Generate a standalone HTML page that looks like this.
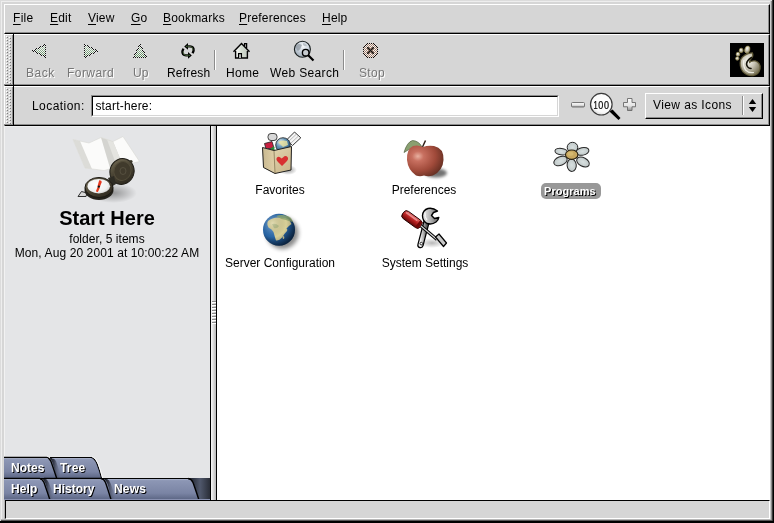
<!DOCTYPE html>
<html><head><meta charset="utf-8">
<style>
*{margin:0;padding:0;box-sizing:border-box}
body{will-change:transform;}
html,body{width:774px;height:523px;overflow:hidden;background:#d6d6d6;font-family:"Liberation Sans",sans-serif;font-size:12px;color:#000}
.a{position:absolute}
.t{position:absolute;white-space:nowrap;line-height:14px}
.ins{color:#767676;text-shadow:1px 1px 0 #fff}
u{text-decoration:underline;text-decoration-thickness:1px;text-underline-offset:2px}
</style></head><body>
<!-- window border -->
<div class="a" style="left:0;top:0;width:774px;height:523px;background:#d6d6d6"></div>
<div class="a" style="left:0;top:0;width:1px;height:523px;background:#dcdcdc"></div>
<div class="a" style="left:0;top:0;width:774px;height:1px;background:#dcdcdc"></div>
<div class="a" style="left:1px;top:1px;width:1px;height:520px;background:#eeeeee"></div>
<div class="a" style="left:1px;top:1px;width:771px;height:1px;background:#eeeeee"></div>
<div class="a" style="left:773px;top:0;width:1px;height:523px;background:#000"></div>
<div class="a" style="left:772px;top:0;width:1px;height:523px;background:#383838"></div>
<div class="a" style="left:771px;top:1px;width:1px;height:521px;background:#8c8c8c"></div>
<div class="a" style="left:770px;top:1px;width:1px;height:521px;background:#cccccc"></div>
<div class="a" style="left:0;top:521px;width:774px;height:2px;background:#000"></div>
<div class="a" style="left:1px;top:520px;width:771px;height:1px;background:#585858"></div>
<div class="a" style="left:1px;top:519px;width:770px;height:1px;background:#b8b8b8"></div>

<!-- menubar x4..769 y4..33 -->
<div class="a" style="left:4px;top:4px;width:766px;height:30px;background:#d6d6d6;border-top:1px solid #fff;border-left:1px solid #fff;border-right:1px solid #000;border-bottom:1px solid #000"></div>
<div class="a" style="left:5px;top:32px;width:764px;height:1px;background:#8c8c8c"></div>
<div class="a" style="left:768px;top:5px;width:1px;height:28px;background:#8c8c8c"></div>

<div class="t" style="left:13px;top:11px;letter-spacing:0.3px"><u>F</u>ile</div>
<div class="t" style="left:50px;top:11px;letter-spacing:0.2px"><u>E</u>dit</div>
<div class="t" style="left:88px;top:11px;letter-spacing:0.2px"><u>V</u>iew</div>
<div class="t" style="left:131px;top:11px;letter-spacing:0.2px"><u>G</u>o</div>
<div class="t" style="left:163px;top:11px;letter-spacing:0.2px"><u>B</u>ookmarks</div>
<div class="t" style="left:239px;top:11px;letter-spacing:0.2px"><u>P</u>references</div>
<div class="t" style="left:322px;top:11px;letter-spacing:0.2px"><u>H</u>elp</div>

<!-- toolbar dock y34..85 -->
<div class="a" style="left:4px;top:34px;width:766px;height:52px;background:#d6d6d6;border-top:1px solid #fff;border-left:1px solid #fff;border-bottom:1px solid #000;border-right:1px solid #000"></div>
<div class="a" style="left:13px;top:34px;width:1px;height:52px;background:#000"></div>
<div class="a" style="left:14px;top:34px;width:755px;height:1px;background:#fff"></div>
<div class="a" style="left:14px;top:84px;width:755px;height:1px;background:#8c8c8c"></div>
<div class="a" style="left:768px;top:35px;width:1px;height:50px;background:#8c8c8c"></div>

<!-- toolbar buttons -->
<div class="t ins" style="left:26px;top:66px;letter-spacing:0.5px">Back</div>
<div class="t ins" style="left:67px;top:66px;letter-spacing:0.45px">Forward</div>
<div class="t ins" style="left:133px;top:66px">Up</div>
<div class="t" style="left:167px;top:66px;letter-spacing:0.18px">Refresh</div>
<div class="t" style="left:226px;top:66px;letter-spacing:0.3px">Home</div>
<div class="t" style="left:270px;top:66px;letter-spacing:0.35px">Web Search</div>
<div class="t ins" style="left:359px;top:66px;letter-spacing:0.3px">Stop</div>
<div class="a" style="left:214px;top:50px;width:1px;height:20px;background:#8c8c8c"></div>
<div class="a" style="left:215px;top:50px;width:1px;height:20px;background:#fff"></div>
<div class="a" style="left:343px;top:50px;width:1px;height:20px;background:#8c8c8c"></div>
<div class="a" style="left:344px;top:50px;width:1px;height:20px;background:#fff"></div>
<svg class="a" style="left:0;top:0" width="774" height="90" viewBox="0 0 774 90">
<defs>
<pattern id="stip" width="2" height="2" patternUnits="userSpaceOnUse"><rect width="2" height="2" fill="#e8ece8"/><rect width="1" height="1" fill="#98a898"/><rect x="1" y="1" width="1" height="1" fill="#98a898"/></pattern>
<pattern id="stip2" width="2" height="2" patternUnits="userSpaceOnUse"><rect width="2" height="2" fill="#f0ecea"/><rect width="1" height="1" fill="#a08878"/><rect x="1" y="1" width="1" height="1" fill="#a08878"/></pattern>
<linearGradient id="houseg" x1="0" y1="0" x2="1" y2="0"><stop offset="0" stop-color="#fff"/><stop offset="0.5" stop-color="#d4dcd0"/><stop offset="1" stop-color="#c0c8c0"/></linearGradient>
<radialGradient id="globeg" cx="0.55" cy="0.3" r="0.75"><stop offset="0" stop-color="#f8fafc"/><stop offset="0.55" stop-color="#c4ced8"/><stop offset="1" stop-color="#98a4b0"/></radialGradient>
</defs>
<!-- refresh -->
<g fill="none" stroke-linecap="butt">
<path d="M187.5 46.4 H190 Q194 46.6 193.6 50.8 L192.6 53.3" stroke="#000" stroke-width="2.3"/>
<path d="M188.5 55.4 H186 Q182 55.2 182.4 51.2 L183.4 48.6" stroke="#000" stroke-width="2.3"/>
<path d="M187.5 46.4 H190 Q193.2 46.8 193 50.3" stroke="#5a7a4a" stroke-width="0.8"/>
<path d="M188.5 55.4 H186 Q183 55 183.1 51.6" stroke="#5a7a4a" stroke-width="0.8"/>
</g>
<path d="M184.2 46.4 L188 43 L188 49.8 Z" fill="#000"/>
<path d="M191.8 55.4 L188 52 L188 58.8 Z" fill="#000"/>
<path d="M186 46.4 L187.4 45.2 L187.4 47.6 Z" fill="#5a8a4a"/>
<path d="M190 55.4 L188.6 54.2 L188.6 56.6 Z" fill="#5a8a4a"/>
<!-- home -->
<path d="M235.5 51.5 L241.5 45 L247.5 51.5 V58 H235.5 Z" fill="url(#houseg)"/>
<path d="M233.5 51.7 L241.5 43.5 L249.5 51.7" fill="none" stroke="#000" stroke-width="1.4"/>
<path d="M235.6 51 V58 H247.4 V51" fill="none" stroke="#000" stroke-width="1.4"/>
<path d="M244.6 46 V43.6 H246.6 V48" fill="none" stroke="#000" stroke-width="1.3"/>
<path d="M238.6 58 V53.6 H241.4 V58" fill="#e8ece8" stroke="#000" stroke-width="1.3"/>
<!-- web search -->
<circle cx="302.4" cy="49.2" r="8" fill="url(#globeg)" stroke="#1a2020" stroke-width="1.1"/>
<path d="M296 45 Q299 43 302 45 Q301 49 298 51 Q295.5 49 296 45 Z" fill="#8c949c" opacity="0.7"/>
<path d="M303 43 Q306 43 307 46 Q305 47 303 45 Z" fill="#a8b0b8" opacity="0.7"/>
<line x1="308.2" y1="55.2" x2="313.5" y2="60.5" stroke="#000" stroke-width="2.2"/>
<circle cx="305.7" cy="52.7" r="3.3" fill="#c8ccd0" stroke="#000" stroke-width="1.4"/>
</svg>

<svg class="a" style="left:0;top:0" width="400" height="70" viewBox="0 0 400 70" shape-rendering="crispEdges"><rect x="44" y="44" width="1" height="1" fill="#101010"/><rect x="45" y="44" width="1" height="1" fill="#e8e8e8"/><rect x="42" y="45" width="1" height="1" fill="#e8e8e8"/><rect x="43" y="45" width="1" height="1" fill="#101010"/><rect x="44" y="45" width="1" height="1" fill="#e8e8e8"/><rect x="45" y="45" width="1" height="1" fill="#101010"/><rect x="40" y="46" width="1" height="1" fill="#101010"/><rect x="41" y="46" width="1" height="1" fill="#e8e8e8"/><rect x="42" y="46" width="1" height="1" fill="#101010"/><rect x="43" y="46" width="1" height="1" fill="#f4f4f4"/><rect x="44" y="46" width="1" height="1" fill="#acc5ac"/><rect x="45" y="46" width="1" height="1" fill="#e8e8e8"/><rect x="38" y="47" width="1" height="1" fill="#e8e8e8"/><rect x="39" y="47" width="1" height="1" fill="#101010"/><rect x="40" y="47" width="1" height="1" fill="#e8e8e8"/><rect x="41" y="47" width="1" height="1" fill="#a4bea4"/><rect x="42" y="47" width="1" height="1" fill="#f4f4f4"/><rect x="43" y="47" width="1" height="1" fill="#a4bea4"/><rect x="44" y="47" width="1" height="1" fill="#f4f4f4"/><rect x="45" y="47" width="1" height="1" fill="#101010"/><rect x="36" y="48" width="1" height="1" fill="#101010"/><rect x="37" y="48" width="1" height="1" fill="#e8e8e8"/><rect x="38" y="48" width="1" height="1" fill="#101010"/><rect x="39" y="48" width="1" height="1" fill="#f4f4f4"/><rect x="40" y="48" width="1" height="1" fill="#9bb89b"/><rect x="41" y="48" width="1" height="1" fill="#f4f4f4"/><rect x="42" y="48" width="1" height="1" fill="#9bb89b"/><rect x="43" y="48" width="1" height="1" fill="#f4f4f4"/><rect x="44" y="48" width="1" height="1" fill="#9bb89b"/><rect x="45" y="48" width="1" height="1" fill="#e8e8e8"/><rect x="34" y="49" width="1" height="1" fill="#e8e8e8"/><rect x="35" y="49" width="1" height="1" fill="#101010"/><rect x="36" y="49" width="1" height="1" fill="#e8e8e8"/><rect x="37" y="49" width="1" height="1" fill="#93b193"/><rect x="38" y="49" width="1" height="1" fill="#f4f4f4"/><rect x="39" y="49" width="1" height="1" fill="#93b193"/><rect x="40" y="49" width="1" height="1" fill="#f4f4f4"/><rect x="41" y="49" width="1" height="1" fill="#93b193"/><rect x="42" y="49" width="1" height="1" fill="#f4f4f4"/><rect x="43" y="49" width="1" height="1" fill="#93b193"/><rect x="44" y="49" width="1" height="1" fill="#f4f4f4"/><rect x="45" y="49" width="1" height="1" fill="#101010"/><rect x="32" y="50" width="1" height="1" fill="#101010"/><rect x="33" y="50" width="1" height="1" fill="#e8e8e8"/><rect x="34" y="50" width="1" height="1" fill="#101010"/><rect x="35" y="50" width="1" height="1" fill="#f4f4f4"/><rect x="36" y="50" width="1" height="1" fill="#8aab8a"/><rect x="37" y="50" width="1" height="1" fill="#f4f4f4"/><rect x="38" y="50" width="1" height="1" fill="#8aab8a"/><rect x="39" y="50" width="1" height="1" fill="#f4f4f4"/><rect x="40" y="50" width="1" height="1" fill="#8aab8a"/><rect x="41" y="50" width="1" height="1" fill="#f4f4f4"/><rect x="42" y="50" width="1" height="1" fill="#8aab8a"/><rect x="43" y="50" width="1" height="1" fill="#f4f4f4"/><rect x="44" y="50" width="1" height="1" fill="#8aab8a"/><rect x="45" y="50" width="1" height="1" fill="#e8e8e8"/><rect x="33" y="51" width="1" height="1" fill="#101010"/><rect x="34" y="51" width="1" height="1" fill="#e8e8e8"/><rect x="35" y="51" width="1" height="1" fill="#101010"/><rect x="36" y="51" width="1" height="1" fill="#f4f4f4"/><rect x="37" y="51" width="1" height="1" fill="#82a582"/><rect x="38" y="51" width="1" height="1" fill="#f4f4f4"/><rect x="39" y="51" width="1" height="1" fill="#82a582"/><rect x="40" y="51" width="1" height="1" fill="#f4f4f4"/><rect x="41" y="51" width="1" height="1" fill="#82a582"/><rect x="42" y="51" width="1" height="1" fill="#f4f4f4"/><rect x="43" y="51" width="1" height="1" fill="#82a582"/><rect x="44" y="51" width="1" height="1" fill="#f4f4f4"/><rect x="45" y="51" width="1" height="1" fill="#101010"/><rect x="35" y="52" width="1" height="1" fill="#e8e8e8"/><rect x="36" y="52" width="1" height="1" fill="#101010"/><rect x="37" y="52" width="1" height="1" fill="#e8e8e8"/><rect x="38" y="52" width="1" height="1" fill="#799e79"/><rect x="39" y="52" width="1" height="1" fill="#f4f4f4"/><rect x="40" y="52" width="1" height="1" fill="#799e79"/><rect x="41" y="52" width="1" height="1" fill="#f4f4f4"/><rect x="42" y="52" width="1" height="1" fill="#799e79"/><rect x="43" y="52" width="1" height="1" fill="#f4f4f4"/><rect x="44" y="52" width="1" height="1" fill="#799e79"/><rect x="45" y="52" width="1" height="1" fill="#e8e8e8"/><rect x="37" y="53" width="1" height="1" fill="#101010"/><rect x="38" y="53" width="1" height="1" fill="#e8e8e8"/><rect x="39" y="53" width="1" height="1" fill="#101010"/><rect x="40" y="53" width="1" height="1" fill="#f4f4f4"/><rect x="41" y="53" width="1" height="1" fill="#709870"/><rect x="42" y="53" width="1" height="1" fill="#f4f4f4"/><rect x="43" y="53" width="1" height="1" fill="#709870"/><rect x="44" y="53" width="1" height="1" fill="#f4f4f4"/><rect x="45" y="53" width="1" height="1" fill="#101010"/><rect x="39" y="54" width="1" height="1" fill="#e8e8e8"/><rect x="40" y="54" width="1" height="1" fill="#101010"/><rect x="41" y="54" width="1" height="1" fill="#e8e8e8"/><rect x="42" y="54" width="1" height="1" fill="#689168"/><rect x="43" y="54" width="1" height="1" fill="#f4f4f4"/><rect x="44" y="54" width="1" height="1" fill="#689168"/><rect x="45" y="54" width="1" height="1" fill="#e8e8e8"/><rect x="41" y="55" width="1" height="1" fill="#101010"/><rect x="42" y="55" width="1" height="1" fill="#e8e8e8"/><rect x="43" y="55" width="1" height="1" fill="#101010"/><rect x="44" y="55" width="1" height="1" fill="#f4f4f4"/><rect x="45" y="55" width="1" height="1" fill="#101010"/><rect x="43" y="56" width="1" height="1" fill="#e8e8e8"/><rect x="44" y="56" width="1" height="1" fill="#101010"/><rect x="45" y="56" width="1" height="1" fill="#e8e8e8"/><rect x="45" y="57" width="1" height="1" fill="#101010"/><rect x="84" y="44" width="1" height="1" fill="#101010"/><rect x="85" y="44" width="1" height="1" fill="#e8e8e8"/><rect x="84" y="45" width="1" height="1" fill="#e8e8e8"/><rect x="85" y="45" width="1" height="1" fill="#101010"/><rect x="86" y="45" width="1" height="1" fill="#e8e8e8"/><rect x="87" y="45" width="1" height="1" fill="#101010"/><rect x="84" y="46" width="1" height="1" fill="#101010"/><rect x="85" y="46" width="1" height="1" fill="#f4f4f4"/><rect x="86" y="46" width="1" height="1" fill="#acc5ac"/><rect x="87" y="46" width="1" height="1" fill="#e8e8e8"/><rect x="88" y="46" width="1" height="1" fill="#101010"/><rect x="89" y="46" width="1" height="1" fill="#e8e8e8"/><rect x="84" y="47" width="1" height="1" fill="#e8e8e8"/><rect x="85" y="47" width="1" height="1" fill="#a4bea4"/><rect x="86" y="47" width="1" height="1" fill="#f4f4f4"/><rect x="87" y="47" width="1" height="1" fill="#a4bea4"/><rect x="88" y="47" width="1" height="1" fill="#f4f4f4"/><rect x="89" y="47" width="1" height="1" fill="#101010"/><rect x="90" y="47" width="1" height="1" fill="#e8e8e8"/><rect x="91" y="47" width="1" height="1" fill="#101010"/><rect x="84" y="48" width="1" height="1" fill="#101010"/><rect x="85" y="48" width="1" height="1" fill="#f4f4f4"/><rect x="86" y="48" width="1" height="1" fill="#9bb89b"/><rect x="87" y="48" width="1" height="1" fill="#f4f4f4"/><rect x="88" y="48" width="1" height="1" fill="#9bb89b"/><rect x="89" y="48" width="1" height="1" fill="#f4f4f4"/><rect x="90" y="48" width="1" height="1" fill="#9bb89b"/><rect x="91" y="48" width="1" height="1" fill="#e8e8e8"/><rect x="92" y="48" width="1" height="1" fill="#101010"/><rect x="93" y="48" width="1" height="1" fill="#e8e8e8"/><rect x="84" y="49" width="1" height="1" fill="#e8e8e8"/><rect x="85" y="49" width="1" height="1" fill="#93b193"/><rect x="86" y="49" width="1" height="1" fill="#f4f4f4"/><rect x="87" y="49" width="1" height="1" fill="#93b193"/><rect x="88" y="49" width="1" height="1" fill="#f4f4f4"/><rect x="89" y="49" width="1" height="1" fill="#93b193"/><rect x="90" y="49" width="1" height="1" fill="#f4f4f4"/><rect x="91" y="49" width="1" height="1" fill="#93b193"/><rect x="92" y="49" width="1" height="1" fill="#f4f4f4"/><rect x="93" y="49" width="1" height="1" fill="#101010"/><rect x="94" y="49" width="1" height="1" fill="#e8e8e8"/><rect x="95" y="49" width="1" height="1" fill="#101010"/><rect x="84" y="50" width="1" height="1" fill="#101010"/><rect x="85" y="50" width="1" height="1" fill="#f4f4f4"/><rect x="86" y="50" width="1" height="1" fill="#8aab8a"/><rect x="87" y="50" width="1" height="1" fill="#f4f4f4"/><rect x="88" y="50" width="1" height="1" fill="#8aab8a"/><rect x="89" y="50" width="1" height="1" fill="#f4f4f4"/><rect x="90" y="50" width="1" height="1" fill="#8aab8a"/><rect x="91" y="50" width="1" height="1" fill="#f4f4f4"/><rect x="92" y="50" width="1" height="1" fill="#8aab8a"/><rect x="93" y="50" width="1" height="1" fill="#f4f4f4"/><rect x="94" y="50" width="1" height="1" fill="#8aab8a"/><rect x="95" y="50" width="1" height="1" fill="#e8e8e8"/><rect x="96" y="50" width="1" height="1" fill="#101010"/><rect x="97" y="50" width="1" height="1" fill="#e8e8e8"/><rect x="84" y="51" width="1" height="1" fill="#e8e8e8"/><rect x="85" y="51" width="1" height="1" fill="#82a582"/><rect x="86" y="51" width="1" height="1" fill="#f4f4f4"/><rect x="87" y="51" width="1" height="1" fill="#82a582"/><rect x="88" y="51" width="1" height="1" fill="#f4f4f4"/><rect x="89" y="51" width="1" height="1" fill="#82a582"/><rect x="90" y="51" width="1" height="1" fill="#f4f4f4"/><rect x="91" y="51" width="1" height="1" fill="#82a582"/><rect x="92" y="51" width="1" height="1" fill="#f4f4f4"/><rect x="93" y="51" width="1" height="1" fill="#82a582"/><rect x="94" y="51" width="1" height="1" fill="#f4f4f4"/><rect x="95" y="51" width="1" height="1" fill="#101010"/><rect x="96" y="51" width="1" height="1" fill="#e8e8e8"/><rect x="97" y="51" width="1" height="1" fill="#101010"/><rect x="84" y="52" width="1" height="1" fill="#101010"/><rect x="85" y="52" width="1" height="1" fill="#f4f4f4"/><rect x="86" y="52" width="1" height="1" fill="#799e79"/><rect x="87" y="52" width="1" height="1" fill="#f4f4f4"/><rect x="88" y="52" width="1" height="1" fill="#799e79"/><rect x="89" y="52" width="1" height="1" fill="#f4f4f4"/><rect x="90" y="52" width="1" height="1" fill="#799e79"/><rect x="91" y="52" width="1" height="1" fill="#f4f4f4"/><rect x="92" y="52" width="1" height="1" fill="#799e79"/><rect x="93" y="52" width="1" height="1" fill="#e8e8e8"/><rect x="94" y="52" width="1" height="1" fill="#101010"/><rect x="95" y="52" width="1" height="1" fill="#e8e8e8"/><rect x="84" y="53" width="1" height="1" fill="#e8e8e8"/><rect x="85" y="53" width="1" height="1" fill="#709870"/><rect x="86" y="53" width="1" height="1" fill="#f4f4f4"/><rect x="87" y="53" width="1" height="1" fill="#709870"/><rect x="88" y="53" width="1" height="1" fill="#f4f4f4"/><rect x="89" y="53" width="1" height="1" fill="#709870"/><rect x="90" y="53" width="1" height="1" fill="#f4f4f4"/><rect x="91" y="53" width="1" height="1" fill="#101010"/><rect x="92" y="53" width="1" height="1" fill="#e8e8e8"/><rect x="93" y="53" width="1" height="1" fill="#101010"/><rect x="84" y="54" width="1" height="1" fill="#101010"/><rect x="85" y="54" width="1" height="1" fill="#f4f4f4"/><rect x="86" y="54" width="1" height="1" fill="#689168"/><rect x="87" y="54" width="1" height="1" fill="#f4f4f4"/><rect x="88" y="54" width="1" height="1" fill="#689168"/><rect x="89" y="54" width="1" height="1" fill="#e8e8e8"/><rect x="90" y="54" width="1" height="1" fill="#101010"/><rect x="91" y="54" width="1" height="1" fill="#e8e8e8"/><rect x="84" y="55" width="1" height="1" fill="#e8e8e8"/><rect x="85" y="55" width="1" height="1" fill="#5f8b5f"/><rect x="86" y="55" width="1" height="1" fill="#f4f4f4"/><rect x="87" y="55" width="1" height="1" fill="#101010"/><rect x="88" y="55" width="1" height="1" fill="#e8e8e8"/><rect x="89" y="55" width="1" height="1" fill="#101010"/><rect x="84" y="56" width="1" height="1" fill="#101010"/><rect x="85" y="56" width="1" height="1" fill="#e8e8e8"/><rect x="86" y="56" width="1" height="1" fill="#101010"/><rect x="87" y="56" width="1" height="1" fill="#e8e8e8"/><rect x="84" y="57" width="1" height="1" fill="#e8e8e8"/><rect x="85" y="57" width="1" height="1" fill="#101010"/><rect x="139" y="44" width="1" height="1" fill="#e8e8e8"/><rect x="140" y="44" width="1" height="1" fill="#101010"/><rect x="139" y="45" width="1" height="1" fill="#101010"/><rect x="140" y="45" width="1" height="1" fill="#e8e8e8"/><rect x="138" y="46" width="1" height="1" fill="#101010"/><rect x="139" y="46" width="1" height="1" fill="#e8e8e8"/><rect x="140" y="46" width="1" height="1" fill="#101010"/><rect x="141" y="46" width="1" height="1" fill="#e8e8e8"/><rect x="138" y="47" width="1" height="1" fill="#e8e8e8"/><rect x="139" y="47" width="1" height="1" fill="#a4bea4"/><rect x="140" y="47" width="1" height="1" fill="#f4f4f4"/><rect x="141" y="47" width="1" height="1" fill="#101010"/><rect x="137" y="48" width="1" height="1" fill="#e8e8e8"/><rect x="138" y="48" width="1" height="1" fill="#101010"/><rect x="139" y="48" width="1" height="1" fill="#f4f4f4"/><rect x="140" y="48" width="1" height="1" fill="#9bb89b"/><rect x="141" y="48" width="1" height="1" fill="#e8e8e8"/><rect x="142" y="48" width="1" height="1" fill="#101010"/><rect x="137" y="49" width="1" height="1" fill="#101010"/><rect x="138" y="49" width="1" height="1" fill="#f4f4f4"/><rect x="139" y="49" width="1" height="1" fill="#93b193"/><rect x="140" y="49" width="1" height="1" fill="#f4f4f4"/><rect x="141" y="49" width="1" height="1" fill="#93b193"/><rect x="142" y="49" width="1" height="1" fill="#e8e8e8"/><rect x="136" y="50" width="1" height="1" fill="#101010"/><rect x="137" y="50" width="1" height="1" fill="#e8e8e8"/><rect x="138" y="50" width="1" height="1" fill="#8aab8a"/><rect x="139" y="50" width="1" height="1" fill="#f4f4f4"/><rect x="140" y="50" width="1" height="1" fill="#8aab8a"/><rect x="141" y="50" width="1" height="1" fill="#f4f4f4"/><rect x="142" y="50" width="1" height="1" fill="#101010"/><rect x="143" y="50" width="1" height="1" fill="#e8e8e8"/><rect x="136" y="51" width="1" height="1" fill="#e8e8e8"/><rect x="137" y="51" width="1" height="1" fill="#82a582"/><rect x="138" y="51" width="1" height="1" fill="#f4f4f4"/><rect x="139" y="51" width="1" height="1" fill="#82a582"/><rect x="140" y="51" width="1" height="1" fill="#f4f4f4"/><rect x="141" y="51" width="1" height="1" fill="#82a582"/><rect x="142" y="51" width="1" height="1" fill="#f4f4f4"/><rect x="143" y="51" width="1" height="1" fill="#101010"/><rect x="135" y="52" width="1" height="1" fill="#e8e8e8"/><rect x="136" y="52" width="1" height="1" fill="#101010"/><rect x="137" y="52" width="1" height="1" fill="#f4f4f4"/><rect x="138" y="52" width="1" height="1" fill="#799e79"/><rect x="139" y="52" width="1" height="1" fill="#f4f4f4"/><rect x="140" y="52" width="1" height="1" fill="#799e79"/><rect x="141" y="52" width="1" height="1" fill="#f4f4f4"/><rect x="142" y="52" width="1" height="1" fill="#799e79"/><rect x="143" y="52" width="1" height="1" fill="#e8e8e8"/><rect x="144" y="52" width="1" height="1" fill="#101010"/><rect x="135" y="53" width="1" height="1" fill="#101010"/><rect x="136" y="53" width="1" height="1" fill="#f4f4f4"/><rect x="137" y="53" width="1" height="1" fill="#709870"/><rect x="138" y="53" width="1" height="1" fill="#f4f4f4"/><rect x="139" y="53" width="1" height="1" fill="#709870"/><rect x="140" y="53" width="1" height="1" fill="#f4f4f4"/><rect x="141" y="53" width="1" height="1" fill="#709870"/><rect x="142" y="53" width="1" height="1" fill="#f4f4f4"/><rect x="143" y="53" width="1" height="1" fill="#709870"/><rect x="144" y="53" width="1" height="1" fill="#e8e8e8"/><rect x="134" y="54" width="1" height="1" fill="#101010"/><rect x="135" y="54" width="1" height="1" fill="#e8e8e8"/><rect x="136" y="54" width="1" height="1" fill="#689168"/><rect x="137" y="54" width="1" height="1" fill="#f4f4f4"/><rect x="138" y="54" width="1" height="1" fill="#689168"/><rect x="139" y="54" width="1" height="1" fill="#f4f4f4"/><rect x="140" y="54" width="1" height="1" fill="#689168"/><rect x="141" y="54" width="1" height="1" fill="#f4f4f4"/><rect x="142" y="54" width="1" height="1" fill="#689168"/><rect x="143" y="54" width="1" height="1" fill="#f4f4f4"/><rect x="144" y="54" width="1" height="1" fill="#101010"/><rect x="145" y="54" width="1" height="1" fill="#e8e8e8"/><rect x="134" y="55" width="1" height="1" fill="#e8e8e8"/><rect x="135" y="55" width="1" height="1" fill="#5f8b5f"/><rect x="136" y="55" width="1" height="1" fill="#f4f4f4"/><rect x="137" y="55" width="1" height="1" fill="#5f8b5f"/><rect x="138" y="55" width="1" height="1" fill="#f4f4f4"/><rect x="139" y="55" width="1" height="1" fill="#5f8b5f"/><rect x="140" y="55" width="1" height="1" fill="#f4f4f4"/><rect x="141" y="55" width="1" height="1" fill="#5f8b5f"/><rect x="142" y="55" width="1" height="1" fill="#f4f4f4"/><rect x="143" y="55" width="1" height="1" fill="#5f8b5f"/><rect x="144" y="55" width="1" height="1" fill="#f4f4f4"/><rect x="145" y="55" width="1" height="1" fill="#101010"/><rect x="133" y="56" width="1" height="1" fill="#e8e8e8"/><rect x="134" y="56" width="1" height="1" fill="#101010"/><rect x="135" y="56" width="1" height="1" fill="#f4f4f4"/><rect x="136" y="56" width="1" height="1" fill="#578457"/><rect x="137" y="56" width="1" height="1" fill="#f4f4f4"/><rect x="138" y="56" width="1" height="1" fill="#578457"/><rect x="139" y="56" width="1" height="1" fill="#f4f4f4"/><rect x="140" y="56" width="1" height="1" fill="#578457"/><rect x="141" y="56" width="1" height="1" fill="#f4f4f4"/><rect x="142" y="56" width="1" height="1" fill="#578457"/><rect x="143" y="56" width="1" height="1" fill="#f4f4f4"/><rect x="144" y="56" width="1" height="1" fill="#578457"/><rect x="145" y="56" width="1" height="1" fill="#e8e8e8"/><rect x="146" y="56" width="1" height="1" fill="#101010"/><rect x="133" y="57" width="1" height="1" fill="#101010"/><rect x="134" y="57" width="1" height="1" fill="#e8e8e8"/><rect x="135" y="57" width="1" height="1" fill="#101010"/><rect x="136" y="57" width="1" height="1" fill="#e8e8e8"/><rect x="137" y="57" width="1" height="1" fill="#101010"/><rect x="138" y="57" width="1" height="1" fill="#e8e8e8"/><rect x="139" y="57" width="1" height="1" fill="#101010"/><rect x="140" y="57" width="1" height="1" fill="#e8e8e8"/><rect x="141" y="57" width="1" height="1" fill="#101010"/><rect x="142" y="57" width="1" height="1" fill="#e8e8e8"/><rect x="143" y="57" width="1" height="1" fill="#101010"/><rect x="144" y="57" width="1" height="1" fill="#e8e8e8"/><rect x="145" y="57" width="1" height="1" fill="#101010"/><rect x="146" y="57" width="1" height="1" fill="#e8e8e8"/><rect x="367" y="43" width="1" height="1" fill="#100808"/><rect x="368" y="43" width="1" height="1" fill="#e0d8d0"/><rect x="369" y="43" width="1" height="1" fill="#100808"/><rect x="370" y="43" width="1" height="1" fill="#e0d8d0"/><rect x="371" y="43" width="1" height="1" fill="#100808"/><rect x="372" y="43" width="1" height="1" fill="#e0d8d0"/><rect x="373" y="43" width="1" height="1" fill="#100808"/><rect x="365" y="44" width="1" height="1" fill="#e0d8d0"/><rect x="366" y="44" width="1" height="1" fill="#100808"/><rect x="367" y="44" width="1" height="1" fill="#e0d8d0"/><rect x="368" y="44" width="1" height="1" fill="#a08070"/><rect x="369" y="44" width="1" height="1" fill="#f8f4f0"/><rect x="370" y="44" width="1" height="1" fill="#a08070"/><rect x="371" y="44" width="1" height="1" fill="#f8f4f0"/><rect x="372" y="44" width="1" height="1" fill="#a08070"/><rect x="373" y="44" width="1" height="1" fill="#e0d8d0"/><rect x="374" y="44" width="1" height="1" fill="#100808"/><rect x="375" y="44" width="1" height="1" fill="#e0d8d0"/><rect x="364" y="45" width="1" height="1" fill="#e0d8d0"/><rect x="365" y="45" width="1" height="1" fill="#100808"/><rect x="366" y="45" width="1" height="1" fill="#f8f4f0"/><rect x="367" y="45" width="1" height="1" fill="#a08070"/><rect x="368" y="45" width="1" height="1" fill="#f8f4f0"/><rect x="369" y="45" width="1" height="1" fill="#a08070"/><rect x="370" y="45" width="1" height="1" fill="#f8f4f0"/><rect x="371" y="45" width="1" height="1" fill="#a08070"/><rect x="372" y="45" width="1" height="1" fill="#f8f4f0"/><rect x="373" y="45" width="1" height="1" fill="#a08070"/><rect x="374" y="45" width="1" height="1" fill="#f8f4f0"/><rect x="375" y="45" width="1" height="1" fill="#100808"/><rect x="376" y="45" width="1" height="1" fill="#e0d8d0"/><rect x="364" y="46" width="1" height="1" fill="#100808"/><rect x="365" y="46" width="1" height="1" fill="#f8f4f0"/><rect x="366" y="46" width="1" height="1" fill="#a08070"/><rect x="367" y="46" width="1" height="1" fill="#f8f4f0"/><rect x="368" y="46" width="1" height="1" fill="#a08070"/><rect x="369" y="46" width="1" height="1" fill="#f8f4f0"/><rect x="370" y="46" width="1" height="1" fill="#a08070"/><rect x="371" y="46" width="1" height="1" fill="#f8f4f0"/><rect x="372" y="46" width="1" height="1" fill="#a08070"/><rect x="373" y="46" width="1" height="1" fill="#f8f4f0"/><rect x="374" y="46" width="1" height="1" fill="#a08070"/><rect x="375" y="46" width="1" height="1" fill="#f8f4f0"/><rect x="376" y="46" width="1" height="1" fill="#100808"/><rect x="363" y="47" width="1" height="1" fill="#100808"/><rect x="364" y="47" width="1" height="1" fill="#e0d8d0"/><rect x="365" y="47" width="1" height="1" fill="#a08070"/><rect x="366" y="47" width="1" height="1" fill="#f8f4f0"/><rect x="367" y="47" width="1" height="1" fill="#101010"/><rect x="368" y="47" width="1" height="1" fill="#6a5a50"/><rect x="369" y="47" width="1" height="1" fill="#a08070"/><rect x="370" y="47" width="1" height="1" fill="#f8f4f0"/><rect x="371" y="47" width="1" height="1" fill="#a08070"/><rect x="372" y="47" width="1" height="1" fill="#6a5a50"/><rect x="373" y="47" width="1" height="1" fill="#101010"/><rect x="374" y="47" width="1" height="1" fill="#f8f4f0"/><rect x="375" y="47" width="1" height="1" fill="#a08070"/><rect x="376" y="47" width="1" height="1" fill="#e0d8d0"/><rect x="377" y="47" width="1" height="1" fill="#100808"/><rect x="363" y="48" width="1" height="1" fill="#e0d8d0"/><rect x="364" y="48" width="1" height="1" fill="#a08070"/><rect x="365" y="48" width="1" height="1" fill="#f8f4f0"/><rect x="366" y="48" width="1" height="1" fill="#a08070"/><rect x="367" y="48" width="1" height="1" fill="#6a5a50"/><rect x="368" y="48" width="1" height="1" fill="#101010"/><rect x="369" y="48" width="1" height="1" fill="#6a5a50"/><rect x="370" y="48" width="1" height="1" fill="#a08070"/><rect x="371" y="48" width="1" height="1" fill="#6a5a50"/><rect x="372" y="48" width="1" height="1" fill="#101010"/><rect x="373" y="48" width="1" height="1" fill="#6a5a50"/><rect x="374" y="48" width="1" height="1" fill="#a08070"/><rect x="375" y="48" width="1" height="1" fill="#f8f4f0"/><rect x="376" y="48" width="1" height="1" fill="#a08070"/><rect x="377" y="48" width="1" height="1" fill="#e0d8d0"/><rect x="363" y="49" width="1" height="1" fill="#100808"/><rect x="364" y="49" width="1" height="1" fill="#f8f4f0"/><rect x="365" y="49" width="1" height="1" fill="#a08070"/><rect x="366" y="49" width="1" height="1" fill="#f8f4f0"/><rect x="367" y="49" width="1" height="1" fill="#a08070"/><rect x="368" y="49" width="1" height="1" fill="#6a5a50"/><rect x="369" y="49" width="1" height="1" fill="#101010"/><rect x="370" y="49" width="1" height="1" fill="#6a5a50"/><rect x="371" y="49" width="1" height="1" fill="#101010"/><rect x="372" y="49" width="1" height="1" fill="#6a5a50"/><rect x="373" y="49" width="1" height="1" fill="#a08070"/><rect x="374" y="49" width="1" height="1" fill="#f8f4f0"/><rect x="375" y="49" width="1" height="1" fill="#a08070"/><rect x="376" y="49" width="1" height="1" fill="#f8f4f0"/><rect x="377" y="49" width="1" height="1" fill="#100808"/><rect x="363" y="50" width="1" height="1" fill="#e0d8d0"/><rect x="364" y="50" width="1" height="1" fill="#a08070"/><rect x="365" y="50" width="1" height="1" fill="#f8f4f0"/><rect x="366" y="50" width="1" height="1" fill="#a08070"/><rect x="367" y="50" width="1" height="1" fill="#f8f4f0"/><rect x="368" y="50" width="1" height="1" fill="#a08070"/><rect x="369" y="50" width="1" height="1" fill="#6a5a50"/><rect x="370" y="50" width="1" height="1" fill="#101010"/><rect x="371" y="50" width="1" height="1" fill="#6a5a50"/><rect x="372" y="50" width="1" height="1" fill="#a08070"/><rect x="373" y="50" width="1" height="1" fill="#f8f4f0"/><rect x="374" y="50" width="1" height="1" fill="#a08070"/><rect x="375" y="50" width="1" height="1" fill="#f8f4f0"/><rect x="376" y="50" width="1" height="1" fill="#a08070"/><rect x="377" y="50" width="1" height="1" fill="#e0d8d0"/><rect x="363" y="51" width="1" height="1" fill="#100808"/><rect x="364" y="51" width="1" height="1" fill="#f8f4f0"/><rect x="365" y="51" width="1" height="1" fill="#a08070"/><rect x="366" y="51" width="1" height="1" fill="#f8f4f0"/><rect x="367" y="51" width="1" height="1" fill="#a08070"/><rect x="368" y="51" width="1" height="1" fill="#6a5a50"/><rect x="369" y="51" width="1" height="1" fill="#101010"/><rect x="370" y="51" width="1" height="1" fill="#6a5a50"/><rect x="371" y="51" width="1" height="1" fill="#101010"/><rect x="372" y="51" width="1" height="1" fill="#6a5a50"/><rect x="373" y="51" width="1" height="1" fill="#a08070"/><rect x="374" y="51" width="1" height="1" fill="#f8f4f0"/><rect x="375" y="51" width="1" height="1" fill="#a08070"/><rect x="376" y="51" width="1" height="1" fill="#f8f4f0"/><rect x="377" y="51" width="1" height="1" fill="#100808"/><rect x="363" y="52" width="1" height="1" fill="#e0d8d0"/><rect x="364" y="52" width="1" height="1" fill="#a08070"/><rect x="365" y="52" width="1" height="1" fill="#f8f4f0"/><rect x="366" y="52" width="1" height="1" fill="#a08070"/><rect x="367" y="52" width="1" height="1" fill="#6a5a50"/><rect x="368" y="52" width="1" height="1" fill="#101010"/><rect x="369" y="52" width="1" height="1" fill="#6a5a50"/><rect x="370" y="52" width="1" height="1" fill="#a08070"/><rect x="371" y="52" width="1" height="1" fill="#6a5a50"/><rect x="372" y="52" width="1" height="1" fill="#101010"/><rect x="373" y="52" width="1" height="1" fill="#6a5a50"/><rect x="374" y="52" width="1" height="1" fill="#a08070"/><rect x="375" y="52" width="1" height="1" fill="#f8f4f0"/><rect x="376" y="52" width="1" height="1" fill="#a08070"/><rect x="377" y="52" width="1" height="1" fill="#e0d8d0"/><rect x="363" y="53" width="1" height="1" fill="#100808"/><rect x="364" y="53" width="1" height="1" fill="#e0d8d0"/><rect x="365" y="53" width="1" height="1" fill="#a08070"/><rect x="366" y="53" width="1" height="1" fill="#f8f4f0"/><rect x="367" y="53" width="1" height="1" fill="#101010"/><rect x="368" y="53" width="1" height="1" fill="#6a5a50"/><rect x="369" y="53" width="1" height="1" fill="#a08070"/><rect x="370" y="53" width="1" height="1" fill="#f8f4f0"/><rect x="371" y="53" width="1" height="1" fill="#a08070"/><rect x="372" y="53" width="1" height="1" fill="#6a5a50"/><rect x="373" y="53" width="1" height="1" fill="#101010"/><rect x="374" y="53" width="1" height="1" fill="#f8f4f0"/><rect x="375" y="53" width="1" height="1" fill="#a08070"/><rect x="376" y="53" width="1" height="1" fill="#e0d8d0"/><rect x="377" y="53" width="1" height="1" fill="#100808"/><rect x="364" y="54" width="1" height="1" fill="#100808"/><rect x="365" y="54" width="1" height="1" fill="#f8f4f0"/><rect x="366" y="54" width="1" height="1" fill="#a08070"/><rect x="367" y="54" width="1" height="1" fill="#f8f4f0"/><rect x="368" y="54" width="1" height="1" fill="#a08070"/><rect x="369" y="54" width="1" height="1" fill="#f8f4f0"/><rect x="370" y="54" width="1" height="1" fill="#a08070"/><rect x="371" y="54" width="1" height="1" fill="#f8f4f0"/><rect x="372" y="54" width="1" height="1" fill="#a08070"/><rect x="373" y="54" width="1" height="1" fill="#f8f4f0"/><rect x="374" y="54" width="1" height="1" fill="#a08070"/><rect x="375" y="54" width="1" height="1" fill="#f8f4f0"/><rect x="376" y="54" width="1" height="1" fill="#100808"/><rect x="364" y="55" width="1" height="1" fill="#e0d8d0"/><rect x="365" y="55" width="1" height="1" fill="#100808"/><rect x="366" y="55" width="1" height="1" fill="#f8f4f0"/><rect x="367" y="55" width="1" height="1" fill="#a08070"/><rect x="368" y="55" width="1" height="1" fill="#f8f4f0"/><rect x="369" y="55" width="1" height="1" fill="#a08070"/><rect x="370" y="55" width="1" height="1" fill="#f8f4f0"/><rect x="371" y="55" width="1" height="1" fill="#a08070"/><rect x="372" y="55" width="1" height="1" fill="#f8f4f0"/><rect x="373" y="55" width="1" height="1" fill="#a08070"/><rect x="374" y="55" width="1" height="1" fill="#f8f4f0"/><rect x="375" y="55" width="1" height="1" fill="#100808"/><rect x="376" y="55" width="1" height="1" fill="#e0d8d0"/><rect x="365" y="56" width="1" height="1" fill="#e0d8d0"/><rect x="366" y="56" width="1" height="1" fill="#100808"/><rect x="367" y="56" width="1" height="1" fill="#e0d8d0"/><rect x="368" y="56" width="1" height="1" fill="#a08070"/><rect x="369" y="56" width="1" height="1" fill="#f8f4f0"/><rect x="370" y="56" width="1" height="1" fill="#a08070"/><rect x="371" y="56" width="1" height="1" fill="#f8f4f0"/><rect x="372" y="56" width="1" height="1" fill="#a08070"/><rect x="373" y="56" width="1" height="1" fill="#e0d8d0"/><rect x="374" y="56" width="1" height="1" fill="#100808"/><rect x="375" y="56" width="1" height="1" fill="#e0d8d0"/><rect x="367" y="57" width="1" height="1" fill="#100808"/><rect x="368" y="57" width="1" height="1" fill="#e0d8d0"/><rect x="369" y="57" width="1" height="1" fill="#100808"/><rect x="370" y="57" width="1" height="1" fill="#e0d8d0"/><rect x="371" y="57" width="1" height="1" fill="#100808"/><rect x="372" y="57" width="1" height="1" fill="#e0d8d0"/><rect x="373" y="57" width="1" height="1" fill="#100808"/></svg>
<!-- location dock y86..125 -->
<div class="a" style="left:4px;top:86px;width:766px;height:40px;background:#d6d6d6;border-top:1px solid #fff;border-left:1px solid #fff;border-bottom:1px solid #000;border-right:1px solid #000"></div>
<div class="a" style="left:13px;top:86px;width:1px;height:40px;background:#000"></div>
<div class="a" style="left:14px;top:86px;width:755px;height:1px;background:#fff"></div>
<div class="a" style="left:14px;top:124px;width:755px;height:1px;background:#8c8c8c"></div>
<div class="a" style="left:768px;top:87px;width:1px;height:38px;background:#8c8c8c"></div>

<div class="t" style="left:32px;top:99px;letter-spacing:0.45px">Location:</div>
<div class="a" style="left:91px;top:95px;width:468px;height:22px;background:#fff;border-top:1px solid #8c8c8c;border-left:1px solid #8c8c8c;border-right:1px solid #fff;border-bottom:1px solid #fff"></div>
<div class="a" style="left:92px;top:96px;width:466px;height:20px;border-top:1px solid #000;border-left:1px solid #000;border-right:1px solid #d6d6d6;border-bottom:1px solid #d6d6d6"></div>
<div class="t" style="left:95.4px;top:99px;letter-spacing:0.2px">start-here:</div>

<div class="a" style="left:645px;top:93px;width:118px;height:26px;background:#d6d6d6;border-top:1px solid #fff;border-left:1px solid #fff;border-right:1px solid #000;border-bottom:1px solid #000"></div>
<div class="a" style="left:646px;top:117px;width:116px;height:1px;background:#8c8c8c"></div>
<div class="a" style="left:761px;top:94px;width:1px;height:24px;background:#8c8c8c"></div>
<div class="a" style="left:742px;top:96px;width:1px;height:19px;background:#8c8c8c"></div>
<div class="a" style="left:743px;top:96px;width:1px;height:19px;background:#fff"></div>
<div class="t" style="left:653px;top:98px;letter-spacing:0.4px">View as Icons</div>

<!-- sidebar / panes -->
<div class="a" style="left:4px;top:126px;width:206px;height:374px;background:#e4e5e7"></div>
<div class="a" style="left:4px;top:126px;width:1px;height:331px;background:#f2f2f2"></div>
<div class="a" style="left:4px;top:126px;width:206px;height:1px;background:#eeeff0"></div>
<div class="a" style="left:210px;top:126px;width:1px;height:374px;background:#000"></div>
<div class="a" style="left:211px;top:126px;width:5px;height:374px;background:linear-gradient(90deg,#f8f8f8,#e0e0e0 40%,#b8b8b8)"></div>
<div class="a" style="left:216px;top:126px;width:1px;height:374px;background:#000"></div>
<div class="a" style="left:217px;top:126px;width:553px;height:374px;background:#fff"></div>

<div class="t" style="left:4px;top:207px;width:206px;text-align:center;font-weight:bold;font-size:20px;line-height:22px">Start Here</div>
<div class="t" style="left:4px;top:232px;width:206px;text-align:center;letter-spacing:0.05px">folder, 5 items</div>
<div class="t" style="left:4px;top:246px;width:206px;text-align:center;letter-spacing:0.1px">Mon, Aug 20 2001 at 10:00:22 AM</div>

<!-- handles -->
<svg class="a" style="left:0;top:0" width="20" height="130" viewBox="0 0 20 130">
<defs>
<pattern id="hdots" x="5" y="34" width="8" height="3" patternUnits="userSpaceOnUse">
<rect x="2" y="0" width="1" height="1" fill="#7c7c7c"/><rect x="5" y="1" width="1" height="1" fill="#7c7c7c"/>
<rect x="1" y="2" width="1" height="1" fill="#fff"/><rect x="4" y="0" width="1" height="1" fill="#fff"/>
</pattern>
<pattern id="hdots2" x="5" y="86" width="8" height="3" patternUnits="userSpaceOnUse">
<rect x="2" y="0" width="1" height="1" fill="#7c7c7c"/><rect x="5" y="1" width="1" height="1" fill="#7c7c7c"/>
<rect x="1" y="2" width="1" height="1" fill="#fff"/><rect x="4" y="0" width="1" height="1" fill="#fff"/>
</pattern>
</defs>
<rect x="5" y="36" width="7" height="48" fill="url(#hdots)"/>
<rect x="5" y="88" width="7" height="36" fill="url(#hdots2)"/>
<rect x="12" y="35" width="1" height="50" fill="#8c8c8c"/>
<rect x="12" y="87" width="1" height="38" fill="#8c8c8c"/>
<rect x="4" y="84" width="9" height="1" fill="#8c8c8c"/>
<rect x="4" y="124" width="9" height="1" fill="#8c8c8c"/>
</svg>
<!-- zoom controls + option arrows + logo -->
<svg class="a" style="left:560px;top:36px" width="214" height="90" viewBox="560 36 214 90">
<defs>
<linearGradient id="zbar" x1="0" y1="0" x2="0" y2="1"><stop offset="0" stop-color="#fafafa"/><stop offset="0.6" stop-color="#e4e4e4"/><stop offset="1" stop-color="#909090"/></linearGradient>
<radialGradient id="lens" cx="0.6" cy="0.35" r="0.75"><stop offset="0" stop-color="#fff"/><stop offset="0.7" stop-color="#fafafa"/><stop offset="1" stop-color="#c8c8c8"/></radialGradient>
<radialGradient id="foot" cx="0.4" cy="0.35" r="0.7"><stop offset="0" stop-color="#f8f8f0"/><stop offset="0.5" stop-color="#c8c4b4"/><stop offset="1" stop-color="#7a7458"/></radialGradient>
</defs>
<rect x="571.5" y="102.5" width="13" height="4.5" rx="1" fill="url(#zbar)" stroke="#6a6a6a" stroke-width="0.9"/>
<path d="M627.5 98.5 H632 V102.5 H635.5 V106.8 H632 V110.5 H627.5 V106.8 H623.5 V102.5 H627.5 Z" fill="url(#zbar)" stroke="#6a6a6a" stroke-width="0.9"/>
<path d="M609.5 111.5 L612.5 109.5 L620.5 118 L618.5 120 Z" fill="#000"/>
<circle cx="601.3" cy="104.2" r="10.8" fill="url(#lens)" stroke="#3a3a3a" stroke-width="1.2"/>
<g font-family="Liberation Sans" font-size="10" fill="#000" stroke="#000" stroke-width="0.2" text-anchor="middle"><text x="593.6" y="108.6" text-anchor="start" textLength="4.2" lengthAdjust="spacingAndGlyphs">1</text><text x="598.2" y="108.6" text-anchor="start" textLength="5" lengthAdjust="spacingAndGlyphs">0</text><text x="604" y="108.6" text-anchor="start" textLength="5" lengthAdjust="spacingAndGlyphs">0</text></g>
<path d="M748.8 104 L752.5 99 L756.2 104 Z" fill="#000"/>
<path d="M748.8 107 L752.5 112 L756.2 107 Z" fill="#000"/>
<rect x="730" y="43" width="34" height="34" fill="#000"/>
<g>
<path d="M752 53.5 Q744 54.5 741.2 60 Q739.5 66.5 743.5 71.5 Q747.5 75.5 753 75 Q758.5 74 759.5 68.5 Q760 63 755 61.5 Q751 61 749.5 63.5 Q748 61.5 750.5 58.5 Q753 56 752 53.5 Z" fill="none" stroke="#8a8050" stroke-width="2.4" opacity="0.7"/>
<path d="M752 53.5 Q744 54.5 741.2 60 Q739.5 66.5 743.5 71.5 Q747.5 75.5 753 75 Q758.5 74 759.5 68.5 Q760 63 755 61.5 Q751 61 749.5 63.5 Q748 61.5 750.5 58.5 Q753 56 752 53.5 Z" fill="url(#foot)"/>
<path d="M751.5 57.5 Q747 60 746.5 64 Q747 68 751 68.5" fill="none" stroke="#141208" stroke-width="1.6" stroke-linecap="round"/>
<path d="M744 60 Q742.5 65 745.5 70 Q749 73.5 754 72.5" fill="none" stroke="#f8f8f0" stroke-width="1.2" opacity="0.85"/>
<ellipse cx="747.3" cy="49.6" rx="2.5" ry="3.6" transform="rotate(15 747.3 49.6)" fill="url(#foot)" stroke="#a89c60" stroke-width="0.7"/>
<ellipse cx="741.2" cy="50.4" rx="1.9" ry="2.2" fill="url(#foot)" stroke="#a89c60" stroke-width="0.7"/>
<ellipse cx="738" cy="54.2" rx="1.8" ry="2" fill="url(#foot)" stroke="#a89c60" stroke-width="0.7"/>
<ellipse cx="737.3" cy="58.5" rx="1.7" ry="1.7" fill="url(#foot)" stroke="#a89c60" stroke-width="0.7"/>
</g>
</svg>
<!-- pane grip -->
<svg class="a" style="left:210px;top:298px" width="8" height="30" viewBox="210 298 8 30">
<g fill="#8a8a8a">
<rect x="212" y="301" width="4" height="1"/><rect x="212" y="304" width="4" height="1"/><rect x="212" y="307" width="4" height="1"/>
<rect x="212" y="310" width="4" height="1"/><rect x="212" y="313" width="4" height="1"/><rect x="212" y="316" width="4" height="1"/>
<rect x="212" y="319" width="4" height="1"/><rect x="212" y="322" width="4" height="1"/>
</g>
<g fill="#fff">
<rect x="212" y="302" width="4" height="1"/><rect x="212" y="305" width="4" height="1"/><rect x="212" y="308" width="4" height="1"/>
<rect x="212" y="311" width="4" height="1"/><rect x="212" y="314" width="4" height="1"/><rect x="212" y="317" width="4" height="1"/>
<rect x="212" y="320" width="4" height="1"/><rect x="212" y="323" width="4" height="1"/>
</g>
</svg>

<!-- sidebar icon -->
<svg class="a" style="left:60px;top:128px" width="90" height="80" viewBox="60 128 90 80">
<defs>
<radialGradient id="shad" cx="0.5" cy="0.5" r="0.5"><stop offset="0" stop-color="#000" stop-opacity="0.35"/><stop offset="1" stop-color="#000" stop-opacity="0"/></radialGradient>
<linearGradient id="lidg" x1="0" y1="0" x2="1" y2="1"><stop offset="0" stop-color="#7a725c"/><stop offset="0.45" stop-color="#4a4434"/><stop offset="1" stop-color="#26221a"/></linearGradient>
<radialGradient id="faceg" cx="0.4" cy="0.4" r="0.7"><stop offset="0" stop-color="#fff"/><stop offset="0.7" stop-color="#f0f0f0"/><stop offset="1" stop-color="#c8c8c8"/></radialGradient>
</defs>
<!-- map -->
<path d="M73 139.5 L89 143 L101 137.5 L113 141.5 L123 136.5 L139.5 161.5 L123 165.5 L104 170.5 L85 168 Z" fill="#fbfbfa"/>
<path d="M73 139.5 L80 141 L92 169 L85 168 Z" fill="#dcdcd8"/>
<path d="M101 137.5 L113 141.5 L123 165.5 L110 168 Z" fill="#d4d4d0"/>
<path d="M107 139.5 L113 141.5 L123 165.5 L117 166.8 Z" fill="#e4e4e0"/>
<path d="M73 139.5 L89 143 L101 137.5 L113 141.5 L123 136.5 L139.5 161.5 L123 165.5 L104 170.5 L85 168 Z" fill="none" stroke="#d8d8d4" stroke-width="0.6"/>
<!-- shadow -->
<ellipse cx="113" cy="193" rx="24" ry="10" fill="url(#shad)"/>
<!-- lid -->
<ellipse cx="122" cy="171.5" rx="12" ry="13" transform="rotate(20 122 171.5)" fill="url(#lidg)" stroke="#1e1c16" stroke-width="1"/>
<ellipse cx="122.5" cy="171" rx="8.5" ry="9.5" transform="rotate(20 122.5 171)" fill="#403a2c" stroke="#524c3a" stroke-width="1"/>
<ellipse cx="123" cy="171" rx="3" ry="3.5" fill="none" stroke="#5a5444" stroke-width="0.8"/>
<circle cx="131" cy="161.5" r="1.6" fill="#3a3628"/>
<!-- hinge -->
<path d="M108 178 L114 176 L116 184 L111 187 Z" fill="#2e2c24"/>
<!-- pointer -->
<path d="M78 196.5 L81.5 191.5 L87 193 L86 196.5 Z" fill="#d8d8d8" stroke="#303030" stroke-width="1"/>
<!-- base -->
<ellipse cx="99" cy="190" rx="14.5" ry="10" fill="#24221c"/>
<ellipse cx="99" cy="187.5" rx="14" ry="10" fill="url(#lidg)" stroke="#1a1812" stroke-width="1"/>
<ellipse cx="98.8" cy="186.2" rx="11.3" ry="7.2" fill="url(#faceg)"/>
<!-- needle -->
<path d="M99.2 180.2 Q101.5 180 101.8 182 L100 186.5 L97.6 185.8 Z" fill="#e83820"/>
<path d="M97.6 187 L100 187.6 L98 191.8 Q96.5 192.5 96 191 Z" fill="#e84020"/>
<circle cx="98.8" cy="186.6" r="1.2" fill="#101010"/>
</svg>

<!-- tabs -->
<svg class="a" style="left:0;top:450px" width="216" height="52" viewBox="0 450 216 52">
<defs>
<linearGradient id="tabg" x1="0" y1="0" x2="0" y2="1"><stop offset="0" stop-color="#9aa4c0"/><stop offset="0.12" stop-color="#8c96b4"/><stop offset="0.7" stop-color="#7a84a4"/><stop offset="1" stop-color="#5c6684"/></linearGradient>
<linearGradient id="tabsh" x1="0" y1="0" x2="1" y2="0"><stop offset="0" stop-color="#101218"/><stop offset="0.35" stop-color="#2a2e3c" stop-opacity="0.85"/><stop offset="1" stop-color="#7a84a4" stop-opacity="0"/></linearGradient>
<linearGradient id="fillg" x1="0" y1="0" x2="1" y2="0"><stop offset="0" stop-color="#20242e"/><stop offset="0.5" stop-color="#50586c"/><stop offset="1" stop-color="#2a2e38"/></linearGradient>
</defs>
<!-- row 2 filler -->
<rect x="190" y="478" width="20" height="22" fill="url(#fillg)"/>
<!-- row1: Tree then Notes -->
<path d="M50 457.5 H91.5 Q95 458.5 97.3 464.5 Q99.5 470 101.5 478 H50 Z" fill="url(#tabg)"/>
<path d="M50 457.5 H91.5 Q95 458.5 97.3 464.5 Q99.5 470 101.5 478" fill="none" stroke="#000" stroke-width="1.1"/>
<path d="M92 456.6 Q96 457.8 98.3 464 Q100.5 470 102.6 478" fill="none" stroke="#fff" stroke-width="0.9"/>
<path d="M49.5 458 Q52 460 53.5 466 L57 478 H62 Q59 470 56 461 Q54 458 52 458 Z" fill="url(#tabsh)"/>
<path d="M4 457.5 H46.5 Q49.5 458 51 461.5 Q53 467 56.6 478 H4 Z" fill="url(#tabg)"/>
<path d="M4 457.5 H46.5 Q49.5 458 51 461.5 Q53 467 56.6 478" fill="none" stroke="#000" stroke-width="1.4"/>
<!-- row2: News, History, Help -->
<path d="M104 478.5 H188 Q191.5 479 193 482.5 Q195 488 198.8 499.5 H104 Z" fill="url(#tabg)"/>
<path d="M188 478.5 Q191.5 479 193 482.5 Q195 488 198.8 499.5" fill="none" stroke="#000" stroke-width="1.4"/>
<path d="M104 479 Q107 481 108.5 487 L111.5 499.5 H116.5 Q113 490 110.5 483 Q109 479.5 107 479 Z" fill="url(#tabsh)"/>
<path d="M44 478.5 H101 Q104 479 105.5 482.5 Q107.5 488 111 499.5 H44 Z" fill="url(#tabg)"/>
<path d="M44 478.5 H101 Q104 479 105.5 482.5 Q107.5 488 111 499.5" fill="none" stroke="#000" stroke-width="1.4"/>
<path d="M42.5 479 Q45 481 46.5 487 L50 499.5 H55 Q51.5 490 49 483 Q47.5 479.5 45.5 479 Z" fill="url(#tabsh)"/>
<path d="M4 478.5 H39.5 Q42.5 479 44 482.5 Q46 488 49.8 499.5 H4 Z" fill="url(#tabg)"/>
<path d="M4 478.5 H39.5 Q42.5 479 44 482.5 Q46 488 49.8 499.5" fill="none" stroke="#000" stroke-width="1.4"/>
<rect x="4" y="457" width="44" height="1" fill="#000"/>
<rect x="4" y="478" width="186" height="1" fill="#000"/>
<rect x="4" y="458" width="44" height="1" fill="#b4bcd4" opacity="0.7"/>
<rect x="52" y="458" width="39" height="1" fill="#b4bcd4" opacity="0.5"/>
<rect x="4" y="479" width="36" height="1" fill="#b4bcd4" opacity="0.7"/>
<rect x="47" y="479" width="54" height="1" fill="#b4bcd4" opacity="0.5"/>
<rect x="108" y="479" width="80" height="1" fill="#b4bcd4" opacity="0.5"/>
<rect x="4" y="499" width="206" height="1" fill="#8890b0"/>
</svg>
<div class="t" style="left:11px;top:461px;color:#fff;font-weight:bold;text-shadow:1px 1px 0 #000;letter-spacing:0px">Notes</div>
<div class="t" style="left:60px;top:461px;color:#fff;font-weight:bold;text-shadow:1px 1px 0 #000;letter-spacing:0.15px">Tree</div>
<div class="t" style="left:11px;top:482px;color:#fff;font-weight:bold;text-shadow:1px 1px 0 #000;letter-spacing:0.1px">Help</div>
<div class="t" style="left:53px;top:482px;color:#fff;font-weight:bold;text-shadow:1px 1px 0 #000;letter-spacing:0px">History</div>
<div class="t" style="left:114px;top:482px;color:#fff;font-weight:bold;text-shadow:1px 1px 0 #000;letter-spacing:0.2px">News</div>

<!-- content icons -->
<svg class="a" style="left:217px;top:126px" width="554" height="140" viewBox="217 126 554 140">
<defs>
<radialGradient id="appleg" cx="0.3" cy="0.35" r="0.8"><stop offset="0" stop-color="#e8b0a0"/><stop offset="0.2" stop-color="#c87060"/><stop offset="0.6" stop-color="#a04a3a"/><stop offset="1" stop-color="#5a2a1e"/></radialGradient>
<radialGradient id="earthg" cx="0.35" cy="0.35" r="0.75"><stop offset="0" stop-color="#6aa0d8"/><stop offset="0.5" stop-color="#2a68a8"/><stop offset="1" stop-color="#0c2a50"/></radialGradient>
<radialGradient id="earthsh" cx="0.3" cy="0.3" r="0.85"><stop offset="0" stop-color="#fff" stop-opacity="0.25"/><stop offset="0.5" stop-color="#000" stop-opacity="0"/><stop offset="1" stop-color="#000" stop-opacity="0.45"/></radialGradient>
<filter id="blur1" x="-50%" y="-50%" width="200%" height="200%"><feGaussianBlur stdDeviation="1.5"/></filter>
<filter id="blur2" x="-50%" y="-50%" width="200%" height="200%"><feGaussianBlur stdDeviation="2.2"/></filter>
<radialGradient id="petal" cx="0.5" cy="0.5" r="0.6"><stop offset="0" stop-color="#d8e0e0"/><stop offset="0.7" stop-color="#c4cccc"/><stop offset="1" stop-color="#9aa2a2"/></radialGradient>
<radialGradient id="shad2" cx="0.5" cy="0.5" r="0.5"><stop offset="0" stop-color="#000" stop-opacity="0.4"/><stop offset="1" stop-color="#000" stop-opacity="0"/></radialGradient>
<linearGradient id="bagL" x1="0" y1="0" x2="1" y2="0"><stop offset="0" stop-color="#c8b890"/><stop offset="1" stop-color="#e0d0a8"/></linearGradient>
<linearGradient id="bagF" x1="0" y1="0" x2="1" y2="1"><stop offset="0" stop-color="#e8dcb8"/><stop offset="1" stop-color="#c8b488"/></linearGradient>
<radialGradient id="globe2" cx="0.35" cy="0.3" r="0.8"><stop offset="0" stop-color="#e8f0f0"/><stop offset="0.4" stop-color="#6a98b8"/><stop offset="1" stop-color="#1a4a70"/></radialGradient>
<linearGradient id="redh" x1="0" y1="0" x2="0" y2="1"><stop offset="0" stop-color="#e87070"/><stop offset="0.5" stop-color="#b82020"/><stop offset="1" stop-color="#600808"/></linearGradient>
<linearGradient id="metal" x1="0" y1="0" x2="1" y2="0"><stop offset="0" stop-color="#f0f0f0"/><stop offset="0.5" stop-color="#b0b0b0"/><stop offset="1" stop-color="#606060"/></linearGradient>
</defs>

<!-- favorites bag -->
<ellipse cx="288" cy="170" rx="9" ry="5" fill="url(#shad2)"/>
<path d="M286.5 140 L294.5 132 L300.8 137.8 L292.5 145.5 Z" fill="#f4f4f4" stroke="#202020" stroke-width="0.9"/>
<path d="M289 141 L296 134.5 M291 143 L298 136.5" stroke="#a0a0a0" stroke-width="0.7"/>
<rect x="268" y="133.5" width="9" height="7" rx="3" fill="#d8d8d8" stroke="#303030" stroke-width="0.9"/>
<path d="M264.5 143.5 L272 141.5 L274 148 L266 149 Z" fill="#c82040" stroke="#202020" stroke-width="0.8"/>
<path d="M270 149 L274 146 L275 152 L271 152 Z" fill="#2a8a3a"/>
<circle cx="283" cy="145" r="7.3" fill="url(#globe2)" stroke="#202020" stroke-width="0.8"/>
<path d="M278 142 Q282 139.5 287 141 L288 145 L283 147 Q280 144 278 142 Z" fill="#e8e0a0" opacity="0.85"/>
<path d="M262.5 147.5 L274 150.5 L291.5 146.5 L291 170 L275 173.5 L263.5 167.5 Z" fill="url(#bagF)"/>
<path d="M262.5 147.5 L274 150.5 L275 173.5 L263.5 167.5 Z" fill="url(#bagL)"/>
<path d="M262.5 147.5 L274 150.5 L291.5 146.5 L291 170 L275 173.5 L263.5 167.5 Z" fill="none" stroke="#202020" stroke-width="1"/>
<path d="M274 150.5 L275 173.5" stroke="#6a5a3a" stroke-width="0.6"/>
<path d="M281.5 158.5 Q279 155.5 277 157.5 Q275.5 159.5 278 162 L282 166 L286.5 161.5 Q289 159 287.5 157 Q285.5 155 283 157.5 Z" fill="#d83030"/>

<!-- apple -->
<ellipse cx="436" cy="173" rx="11" ry="4.5" fill="#000" opacity="0.55" filter="url(#blur1)"/>
<path d="M404 152.5 Q407 142 412.5 140.5 Q419 141 422 147 Q413 146 404 152.5 Z" fill="#8aa070" stroke="#506040" stroke-width="0.7"/>
<path d="M422.5 147 L425.5 140.5" stroke="#302018" stroke-width="1.5"/>
<path d="M423 147 Q418 144.5 413 146 Q406.5 149 407 160 Q408 170 416 175.5 Q420 177 424 175.5 Q428 177 433 175.5 Q443 170.5 443.5 160 Q444 148 434 146 Q428 145 423 147 Z" fill="url(#appleg)"/>

<!-- flower -->
<g stroke="#282828" stroke-width="1" fill="url(#petal)">
<ellipse cx="572.5" cy="147.3" rx="5.3" ry="5" />
<ellipse cx="561.2" cy="151.6" rx="6.3" ry="3.2" transform="rotate(8 561.2 151.6)"/>
<ellipse cx="582.5" cy="151.4" rx="6.5" ry="3.8" transform="rotate(-12 582.5 151.4)"/>
<ellipse cx="560.5" cy="161" rx="7" ry="4.3" transform="rotate(-22 560.5 161)"/>
<ellipse cx="583" cy="162" rx="6.8" ry="4.3" transform="rotate(28 583 162)"/>
<ellipse cx="571.7" cy="165.2" rx="4.6" ry="6.2" transform="rotate(-5 571.7 165.2)"/>
</g>
<ellipse cx="571.7" cy="154.7" rx="6.2" ry="4.7" fill="#c8a860" stroke="#282010" stroke-width="1.1"/>
<ellipse cx="570.5" cy="153.8" rx="3" ry="2" fill="#dcc078" opacity="0.7"/>
<!-- globe -->
<circle cx="282.5" cy="233" r="16" fill="#000" opacity="0.45" filter="url(#blur2)"/>
<circle cx="279" cy="229.7" r="16" fill="url(#earthg)"/>
<path d="M268 221 Q273 217 279 217.5 Q284 217 289 219.5 L291.5 224 Q288.5 226 286.5 228.5 Q288 229.5 287 231 Q284 234 282.5 237 Q279 241 276 240.5 Q274.5 236 273.5 232 Q272 229 268.5 227.5 Q266.5 224 268 221 Z" fill="#d8d098"/>
<path d="M276 216 Q283 213.8 290 217 Q292.5 219 293 222 Q289 221.5 286 220 Q281 219.5 276 216 Z" fill="#90a870" opacity="0.85"/>
<path d="M272 224 Q276 223 279 226 Q277 229 274 228 Z" fill="#98a870" opacity="0.6"/>
<ellipse cx="283.5" cy="237.5" rx="0.8" ry="1.6" fill="#d8d098"/>
<circle cx="279" cy="229.7" r="16" fill="url(#earthsh)"/>
<!-- tools -->
<ellipse cx="432" cy="243" rx="13" ry="5" fill="url(#shad2)" opacity="0.7"/>
<path d="M426.5 222 L420.5 245" stroke="#000" stroke-width="6.5" stroke-linecap="round"/>
<path d="M426.5 222 L420.5 245" stroke="url(#metal)" stroke-width="4" stroke-linecap="round"/>
<circle cx="421.3" cy="243.6" r="1.3" fill="#fff" stroke="#000" stroke-width="0.8"/>
<path d="M437.5 211 Q433 207.5 428 208.5 Q423 210 422.5 215.5 Q422.5 221 427 223.5 Q432 225 436 222 Q438.5 220 438.8 217.5 L434.5 218.5 L431.5 215.5 L433.5 212.5 Z" fill="url(#metal)" stroke="#000" stroke-width="1.4" stroke-linejoin="round"/>
<path d="M425 212.5 Q424.5 217 427 220" stroke="#fff" stroke-width="1" fill="none"/>
<g transform="rotate(36 412 219.5)">
<rect x="401" y="215" width="22" height="9" rx="3.5" fill="url(#redh)" stroke="#200000" stroke-width="0.9"/>
<rect x="403" y="216.5" width="14" height="1.6" rx="0.8" fill="#f0a0a0" opacity="0.8"/>
<rect x="419" y="215.5" width="3" height="8" fill="#700808"/>
</g>
<path d="M421 226 L437 239.5" stroke="#000" stroke-width="3.2"/>
<path d="M421 226 L437 239.5" stroke="#d8d8d8" stroke-width="1.1"/>
<path d="M435.5 237 L439 234 L446.5 243 L443.5 246.5 Z" fill="#c8c8c8" stroke="#000" stroke-width="1.2" stroke-linejoin="round"/>
</svg>

<!-- content labels -->
<div class="t" style="left:230px;top:183px;width:100px;text-align:center">Favorites</div>
<div class="t" style="left:374px;top:183px;width:100px;text-align:center">Preferences</div>
<div class="a" style="left:541px;top:183px;width:60px;height:16px;background:#989898;border-radius:5px"></div>
<div class="t" style="left:544px;top:184px;color:#fff;font-weight:bold;font-size:11px;letter-spacing:0.05px;text-shadow:1px 1px 0 #000">Programs</div>
<div class="t" style="left:220px;top:256px;width:120px;text-align:center">Server Configuration</div>
<div class="t" style="left:365px;top:256px;width:120px;text-align:center">System Settings</div>

<!-- status bar -->
<div class="a" style="left:4px;top:500px;width:1px;height:19px;background:#b4b4b4"></div>
<div class="a" style="left:5px;top:500px;width:765px;height:19px;background:#d6d6d6;border-top:1px solid #000;border-left:1px solid #000;border-bottom:1px solid #fff;border-right:1px solid #fff"></div>

</body></html>
